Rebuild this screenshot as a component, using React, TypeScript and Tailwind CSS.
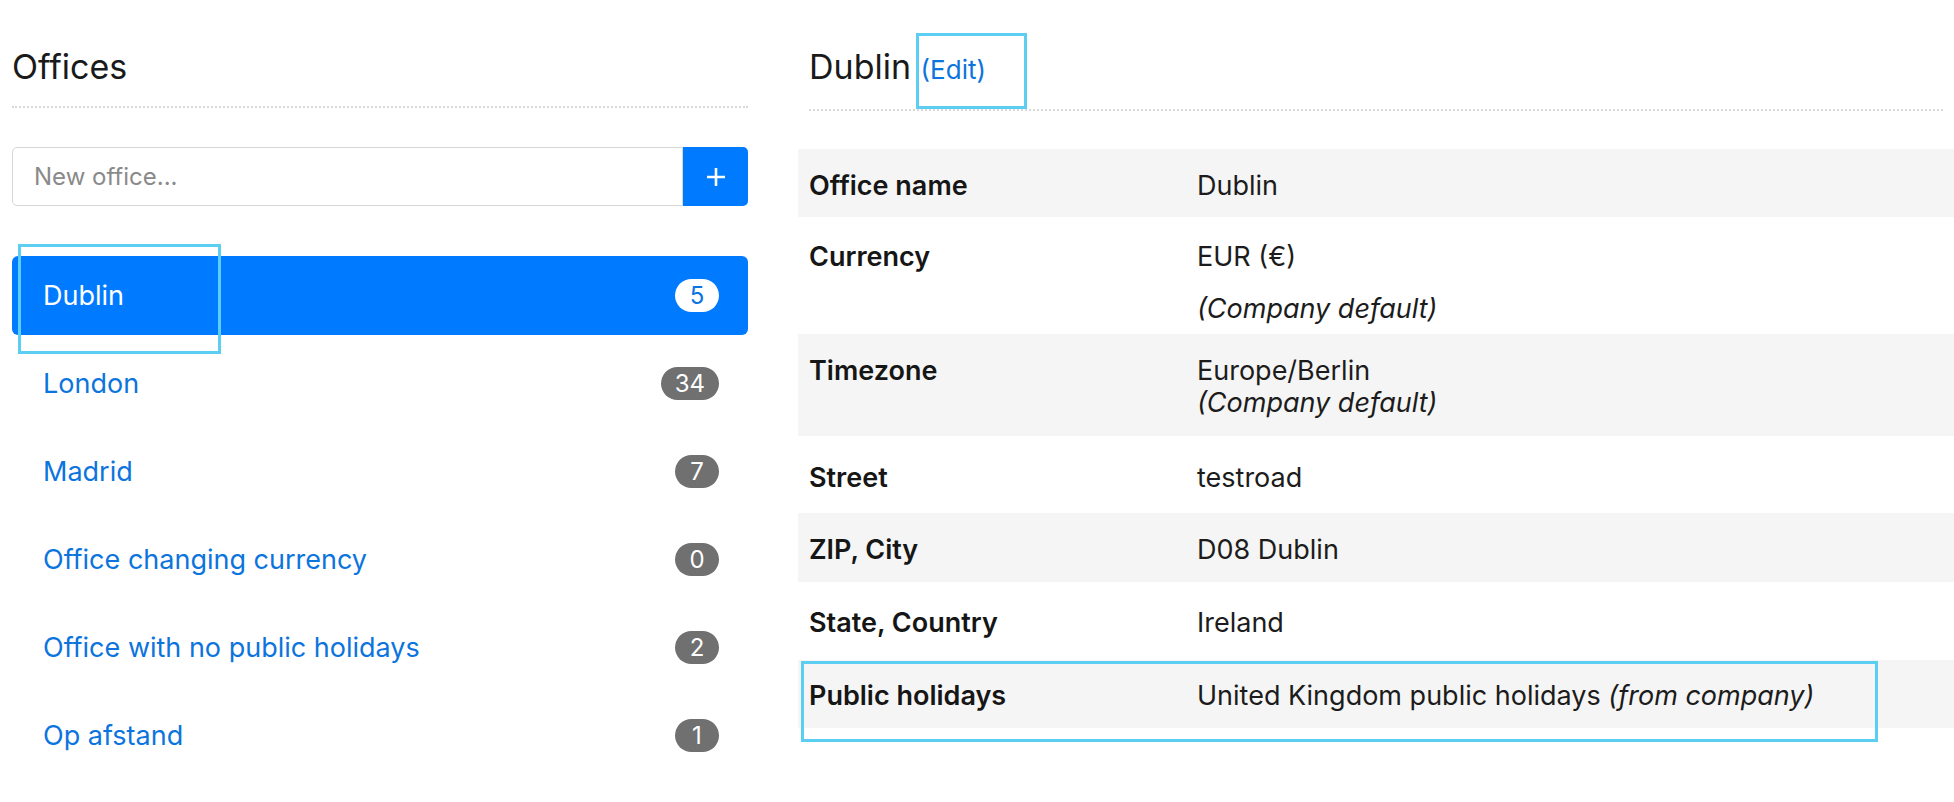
import React from 'react';

const offices = [
  { name: 'Dublin', count: 5 },
  { name: 'London', count: 34 },
  { name: 'Madrid', count: 7 },
  { name: 'Office changing currency', count: 0 },
  { name: 'Office with no public holidays', count: 2 },
  { name: 'Op afstand', count: 1 },
];

function OfficeItem({ name, count, active }: { name: string; count: number; active?: boolean }) {
  return (
    <div
      className={
        active
          ? 'h-[79px] rounded-[6px] pl-[31px] pr-[29px] flex items-center justify-between bg-[#007bff] text-white'
          : 'h-[79px] rounded-[6px] pl-[31px] pr-[29px] flex items-center justify-between text-[#0c74dd]'
      }
    >
      <span className="text-[27px] leading-[32px]">{name}</span>
      <span
        className={
          active
            ? 'h-[33px] min-w-[44px] px-[14px] rounded-full flex items-center justify-center text-[24px] bg-white text-[#0c74dd]'
            : 'h-[33px] min-w-[44px] px-[14px] rounded-full flex items-center justify-center text-[24px] bg-[#707070] text-white'
        }
      >
        {count}
      </span>
    </div>
  );
}

function Row({
  label,
  shaded,
  className,
  children,
}: {
  label: string;
  shaded?: boolean;
  className: string;
  children: React.ReactNode;
}) {
  return (
    <div className={`flex ${shaded ? 'bg-[#f5f5f5]' : ''} ${className}`}>
      <div className="w-[388px] pl-[11px] font-semibold text-[#161616]">{label}</div>
      <div className="flex-1 pl-[11px] text-[#1c1c1c]">{children}</div>
    </div>
  );
}

export default function App() {
  return (
    <div className="relative w-[1954px] h-[802px] bg-white overflow-hidden font-['Inter',sans-serif]">
      <div className="flex pl-[12px] gap-[50px]">
        {/* office list */}
        <div className="w-[736px] shrink-0">
          <h2 className="pt-[46px] pb-[19px] text-[34px] leading-[41px] font-normal text-[#1a1a1a] border-b-2 border-dotted border-[#d9d9d9]">
            Offices
          </h2>
          <div className="mt-[39px] flex h-[59px]">
            <input
              placeholder="New office..."
              className="flex-1 min-w-0 border border-[#d6d6d6] rounded-l-[5px] pl-[21px] text-[24px] outline-none placeholder:text-[#8a8a8a]"
            />
            <button className="w-[65px] bg-[#007bff] rounded-r-[5px] flex items-center justify-center">
              <svg width="18" height="18" viewBox="0 0 18 18">
                <path d="M9 0v18M0 9h18" stroke="white" strokeWidth="2.6" />
              </svg>
            </button>
          </div>
          <div className="mt-[50px] flex flex-col gap-[9px]">
            {offices.map((o, i) => (
              <OfficeItem key={o.name} name={o.name} count={o.count} active={i === 0} />
            ))}
          </div>
        </div>

        {/* office details */}
        <div className="flex-1">
          <h2 className="mx-[11px] pt-[46px] pb-[19px] text-[34px] leading-[41px] font-normal text-[#1a1a1a] border-b-2 border-dotted border-[#d9d9d9]">
            Dublin <span className="text-[26px] text-[#0c74dd]">(Edit)</span>
          </h2>
          <div className="mt-[38px] text-[27px] leading-[32px]">
            <Row label="Office name" shaded className="pt-[21px] pb-[15px]">
              Dublin
            </Row>
            <Row label="Currency" className="pt-[24px] pb-[9px]">
              <div>EUR (€)</div>
              <div className="mt-[20px] italic">(Company default)</div>
            </Row>
            <Row label="Timezone" shaded className="pt-[21px] pb-[17px]">
              <div>Europe/Berlin</div>
              <div className="italic">(Company default)</div>
            </Row>
            <Row label="Street" className="pt-[26px] pb-[19px]">
              testroad
            </Row>
            <Row label="ZIP, City" shaded className="pt-[21px] pb-[16px]">
              D08 Dublin
            </Row>
            <Row label="State, Country" className="pt-[25px] pb-[21px]">
              Ireland
            </Row>
            <Row label="Public holidays" shaded className="pt-[20px] pb-[16px]">
              United Kingdom public holidays <span className="italic">(from company)</span>
            </Row>
          </div>
        </div>
      </div>

      {/* highlight frames */}
      <div className="absolute left-[18px] top-[244px] w-[203px] h-[110px] border-[3px] border-[#5ccef2]" />
      <div className="absolute left-[916px] top-[33px] w-[111px] h-[76px] border-[3px] border-[#5ccef2]" />
      <div className="absolute left-[801px] top-[661px] w-[1077px] h-[81px] border-[3px] border-[#5ccef2]" />
    </div>
  );
}
